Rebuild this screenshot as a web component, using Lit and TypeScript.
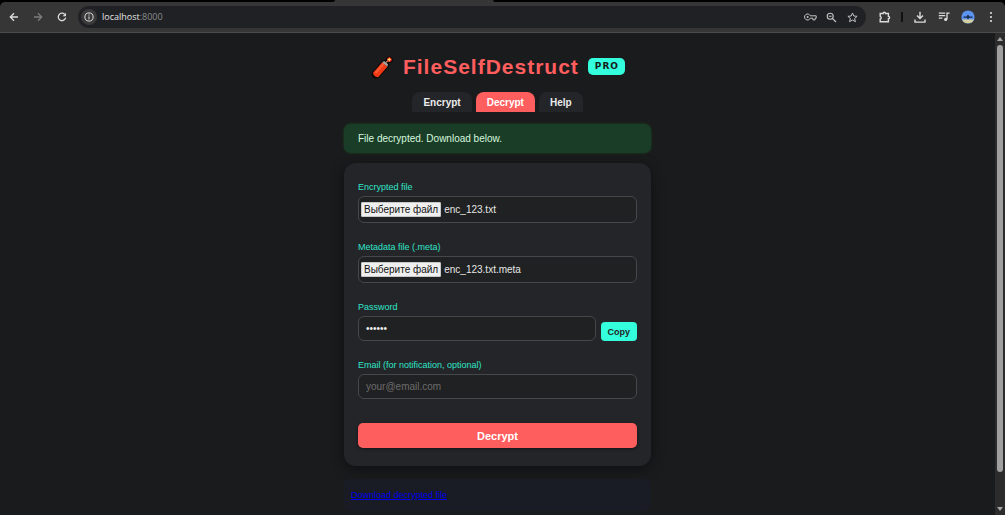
import { LitElement, html, css } from "lit";
import { customElement, property, state } from "lit/decorators.js";
import { classMap } from "lit/directives/class-map.js";

@customElement("browser-bar")
class BrowserBar extends LitElement {
  static styles = css`
    :host {
      display: block;
      background: #000;
      padding-top: 2px;
      border-bottom: 1px solid #4b4b4b;
      position: relative;
    }
    .tab {
      position: absolute;
      top: 0;
      left: 33.2%;
      width: 16%;
      height: 2px;
      border-radius: 4px 4px 0 0;
      background: #363636;
    }
    .bar {
      display: flex;
      align-items: center;
      height: 30px;
      box-sizing: border-box;
      padding: 0 7px 0 6px;
      background: #363636;
      border-radius: 5px 5px 0 0;
    }
    button {
      display: flex;
      align-items: center;
      justify-content: center;
      border: 0;
      padding: 0;
      background: none;
      color: #dcdcdc;
      flex: none;
    }
    svg {
      display: block;
      fill: none;
      stroke: currentColor;
      stroke-width: 1.3;
    }
    .nav {
      width: 16px;
      height: 16px;
      margin-right: 8px;
    }
    .off {
      color: #7c7c7c;
    }
    .address {
      flex: 1;
      display: flex;
      align-items: center;
      height: 22px;
      border-radius: 11px;
      background: #202124;
      padding: 0 7px 0 3px;
      font: 9px/14px "Open Sans", "Noto Sans", sans-serif;
      color: #e4e4e4;
    }
    .info {
      width: 16px;
      height: 16px;
      border-radius: 8px;
      background: #3a3a3a;
      margin-right: 5px;
    }
    .url {
      flex: 1;
    }
    .port {
      color: #8c8d8f;
    }
    .small {
      width: 13px;
      height: 14px;
      margin-left: 8px;
      color: #c4c4c4;
    }
    .tool {
      width: 14px;
      height: 16px;
      margin-left: 10px;
    }
    .tools {
      display: flex;
      align-items: center;
      padding-left: 2px;
    }
    .line {
      width: 2px;
      height: 10px;
      background: #111;
      margin-left: 9px;
    }
    .dots {
      width: 6px;
      margin: 0 4px 0 13px;
    }
  `;

  render() {
    return html`
      <div class="tab"></div>
      <div class="bar">
        <button class="nav" aria-label="Back">
          <svg width="10" height="10" viewBox="0 0 10 10"><path d="M9 5H1.5M5 1.3 1.3 5 5 8.7" /></svg>
        </button>
        <button class="nav off" aria-label="Forward">
          <svg width="10" height="10" viewBox="0 0 10 10"><path d="M1 5h7.5M5 1.3 8.7 5 5 8.7" /></svg>
        </button>
        <button class="nav" aria-label="Reload">
          <svg width="10" height="10" viewBox="0 0 10 10">
            <path d="M8.6 5.6A3.7 3.7 0 1 1 7.7 2.4" /><path d="M9 .8v3.4H5.6z" fill="currentColor" stroke="none" />
          </svg>
        </button>
        <div class="address">
          <button class="info" aria-label="Site information">
            <svg width="10" height="10" viewBox="0 0 10 10">
              <circle cx="5" cy="5" r="4.1" stroke-width="1" /><path d="M5 4.4v3M5 2.4v1.2" stroke-width="1" />
            </svg>
          </button>
          <span class="url">localhost<span class="port">:8000</span></span>
          <button class="small" aria-label="Passwords">
            <svg width="13" height="8" viewBox="0 0 13 8">
              <path d="M6.3 2.8h5.9v2.4h-1.1v1.7H8.9V5.2H6.3A3 3 0 1 1 6.3 2.8Z" stroke-width="1" />
              <circle cx="3.6" cy="4" r="1" fill="currentColor" stroke="none" />
            </svg>
          </button>
          <button class="small" aria-label="Zoom">
            <svg width="11" height="11" viewBox="0 0 11 11">
              <circle cx="4.2" cy="4.2" r="3" stroke-width="1.1" /><path d="M6.5 6.5 10 10M2.8 4.2h2.8" stroke-width="1.1" />
            </svg>
          </button>
          <button class="small" aria-label="Bookmark">
            <svg width="11" height="11" viewBox="0 0 11 11">
              <path d="m5.5 1 1.3 3 3.3.3-2.5 2.2.8 3.2-2.9-1.7-2.9 1.7.8-3.2L.9 4.3 4.2 4Z" stroke-width="1" />
            </svg>
          </button>
        </div>
        <div class="tools">
          <button class="tool" aria-label="Extensions">
            <svg width="12" height="12" viewBox="0 0 12 12">
              <path d="M1.2 2.5h2.9a1.2 1.2 0 0 1 2.4 0h2.9v2.9a1.2 1.2 0 0 1 0 2.4v3H1.2V8a1.4 1.4 0 0 0 0-2.7Z" stroke-width="1.4" />
            </svg>
          </button>
          <span class="line"></span>
          <button class="tool" aria-label="Downloads">
            <svg width="12" height="12" viewBox="0 0 12 12">
              <path d="M6 .8v6.4M3 4.6l3 3 3-3M1 8.4v2.7h10V8.4" stroke-width="1.4" />
            </svg>
          </button>
          <button class="tool" aria-label="Media controls">
            <svg width="12" height="10" viewBox="0 0 12 10">
              <path d="M.8 1.2h6.4M.8 3.7h6.4M.8 6.2h3.6M9 7.2V1.2h2.6" />
              <circle cx="7.7" cy="7.4" r="1.6" fill="currentColor" stroke="none" />
            </svg>
          </button>
          <button class="tool" aria-label="Profile">
            <svg width="14" height="14" viewBox="0 0 14 14">
              <circle cx="7" cy="7" r="6.6" fill="#5b93ee" stroke="none" />
              <path d="M1 9.4h12A6.6 6.6 0 0 1 1 9.4Z" fill="#d8cf9f" stroke="none" />
              <path d="M2.5 6.6h3l1.5-2 1.5 2h3v1.2H8.4L7 9.2 5.6 7.8H2.5Z" fill="#1b2c50" stroke="none" />
            </svg>
          </button>
          <button class="dots" aria-label="Menu">
            <svg width="4" height="12" viewBox="0 0 4 12">
              <g fill="currentColor" stroke="none"><circle cx="2" cy="2" r="1.1" /><circle cx="2" cy="6" r="1.1" /><circle cx="2" cy="10" r="1.1" /></g>
            </svg>
          </button>
        </div>
      </div>
    `;
  }
}

@customElement("file-field")
class FileField extends LitElement {
  @property() label = "";
  @property() filename = "";

  static styles = css`
    :host {
      display: block;
    }
    .label {
      display: block;
      font-size: 9px;
      line-height: 12px;
      margin-bottom: 3px;
      color: #2fe6c8;
    }
    .box {
      position: relative;
      display: flex;
      align-items: center;
      gap: 3px;
      height: 27px;
      box-sizing: border-box;
      padding: 0 2px;
      border: 1px solid #46474a;
      border-radius: 6px;
      background: #202122;
      font-size: 10px;
      line-height: 13px;
      color: #e6e6e6;
    }
    .pick {
      background: #efefef;
      color: #111;
      border: 1px solid #c8c8c8;
      border-radius: 1px;
      padding: 0 2px;
    }
    input {
      position: absolute;
      inset: 0;
      width: 100%;
      opacity: 0;
    }
  `;

  private onChange(e: Event) {
    this.filename = (e.target as HTMLInputElement).files?.[0]?.name ?? "";
  }

  render() {
    return html`
      <label class="label" for="file">${this.label}</label>
      <div class="box">
        <span class="pick">Выберите файл</span>
        <span>${this.filename}</span>
        <input id="file" type="file" @change=${this.onChange} />
      </div>
    `;
  }
}

@customElement("app-root")
class AppRoot extends LitElement {
  @state() private tab = "Decrypt";

  static styles = css`
    :host {
      display: flex;
      flex-direction: column;
      height: 100vh;
      overflow: hidden;
      background: #1a1b1d;
      color: #e8e8e8;
      font-family: "Liberation Sans", Arial, sans-serif;
      font-size: 10px;
      line-height: 12px;
    }
    .view {
      flex: 1;
      min-height: 0;
      display: flex;
    }
    .page {
      flex: 1;
      overflow: hidden;
      padding-top: 21px;
    }
    .column {
      max-width: 307px;
      margin: 0 auto;
    }
    header {
      display: flex;
      align-items: center;
      justify-content: center;
      height: 26px;
      margin-bottom: 12px;
    }
    h1 {
      margin: 0 9px;
      font-size: 21px;
      line-height: 26px;
      letter-spacing: 1px;
      color: #ff5e5e;
    }
    .pro {
      margin-bottom: 2px;
      padding: 0 6px 0 7px;
      border-radius: 5px;
      background: #33ffdd;
      color: #15191a;
      font: bold 9px/17px "DejaVu Sans", sans-serif;
      letter-spacing: 1px;
    }
    nav {
      display: flex;
      justify-content: center;
      gap: 4px;
      margin-bottom: 12px;
    }
    button {
      border: 0;
      font-family: inherit;
      font-weight: bold;
      cursor: pointer;
    }
    .tab {
      height: 20px;
      padding: 0 11px;
      border-radius: 8px 8px 0 0;
      background: #242529;
      color: #ececec;
      font-size: 10px;
    }
    .active {
      background: #ff5e5e;
      color: #fff;
    }
    .alert {
      margin-bottom: 10px;
      padding: 9px 14px 8px;
      border-radius: 7px;
      background: #1a3d27;
      color: #d6f8df;
      box-shadow: 0 0 3px #1d4a22;
    }
    .card {
      display: grid;
      gap: 18px;
      padding: 18px 14px;
      border-radius: 12px;
      background: #242529;
      box-shadow: 0 3px 14px rgba(0, 0, 0, 0.45);
    }
    .label {
      display: block;
      font-size: 9px;
      margin-bottom: 3px;
      color: #2fe6c8;
    }
    .text {
      display: block;
      width: 100%;
      height: 25px;
      box-sizing: border-box;
      padding: 0 7px;
      border: 1px solid #46474a;
      border-radius: 6px;
      background: #202122;
      color: #f0f0f0;
      font: 10px "Liberation Sans", Arial, sans-serif;
    }
    .text::placeholder {
      color: #6c6c6c;
    }
    .row {
      display: flex;
      align-items: flex-end;
      gap: 5px;
    }
    .copy {
      height: 19px;
      padding: 0 7px;
      border-radius: 4px;
      background: #33ffdd;
      color: #202225;
      font-size: 9px;
    }
    .submit {
      height: 25px;
      margin-top: 6px;
      border-radius: 5px;
      background: #ff5e5e;
      color: #fff;
      font-size: 11px;
      box-shadow: 0 1px 3px rgba(0, 0, 0, 0.5);
    }
    .download {
      margin-top: 13px;
      padding: 10px 7px;
      border-radius: 6px;
      background: #191c24;
      font-size: 9px;
    }
    .download a {
      color: #0000ee;
    }
    .scroll {
      display: flex;
      flex-direction: column;
      align-items: center;
      width: 10px;
      padding: 4px 0;
      box-sizing: border-box;
      background: #2c2c2c;
    }
    .scroll svg {
      display: block;
      fill: #a5a5a5;
    }
    .track {
      flex: 1;
      width: 6px;
      margin: 4px 0 3px;
    }
    .thumb {
      height: 93%;
      border-radius: 3px;
      background: #9f9f9f;
    }
  `;

  render() {
    return html`
      <browser-bar></browser-bar>
      <div class="view">
        <main class="page">
          <div class="column">
            <header>
              <svg width="24" height="24" viewBox="0 0 24 24" aria-hidden="true">
                <path d="M6 19.3 15 9.4" stroke="#050505" stroke-width="8.6" stroke-linecap="round" />
                <circle cx="19.4" cy="4.8" r="3.3" fill="#050505" />
                <path d="m3.2 17.4 9-10.2 5.2 4.6-9 10.1c-1.8 1.2-6.3-2.5-5.2-4.5Z" fill="#f03a17" />
                <path d="m4.8 17.2 8.4-9.4 1.6 1.3-8.4 9.5Z" fill="#ff5a34" />
                <path d="m12.2 7.2 2-1.3 3.8 3.3-.6 2.6Z" fill="#a9a3a0" />
                <path d="m16.2 7.4 2.6-2.6" stroke="#d8b08c" stroke-width="1.2" />
                <circle cx="19.4" cy="4.7" r="2.4" fill="#e92b1b" />
                <path d="m19.2 2.6.7 1.4 1.5.6-1.5.7-.7 1.5-.6-1.5-1.5-.7 1.5-.6Z" fill="#ffe873" />
              </svg>
              <h1>FileSelfDestruct</h1>
              <span class="pro">PRO</span>
            </header>
            <nav>
              ${["Encrypt", "Decrypt", "Help"].map(
                (name) => html`<button
                  class=${classMap({ tab: true, active: name === this.tab })}
                  @click=${() => (this.tab = name)}
                >${name}</button>`
              )}
            </nav>
            <div class="alert" role="status">File decrypted. Download below.</div>
            <form class="card" @submit=${(e: Event) => e.preventDefault()}>
              <file-field label="Encrypted file" filename="enc_123.txt"></file-field>
              <file-field label="Metadata file (.meta)" filename="enc_123.txt.meta"></file-field>
              <div>
                <label class="label" for="password">Password</label>
                <div class="row">
                  <input class="text" id="password" type="password" value="123456" />
                  <button class="copy" type="button">Copy</button>
                </div>
              </div>
              <div>
                <label class="label" for="email">Email (for notification, optional)</label>
                <input class="text" id="email" type="email" placeholder="your@email.com" />
              </div>
              <button class="submit" type="submit">Decrypt</button>
            </form>
            <div class="download"><a href="#">Download decrypted file</a></div>
          </div>
        </main>
        <div class="scroll" aria-hidden="true">
          <svg width="6" height="4" viewBox="0 0 6 4"><path d="M0 4 3 0l3 4Z" /></svg>
          <div class="track"><div class="thumb"></div></div>
          <svg width="6" height="4" viewBox="0 0 6 4"><path d="M0 0h6L3 4Z" /></svg>
        </div>
      </div>
    `;
  }
}
